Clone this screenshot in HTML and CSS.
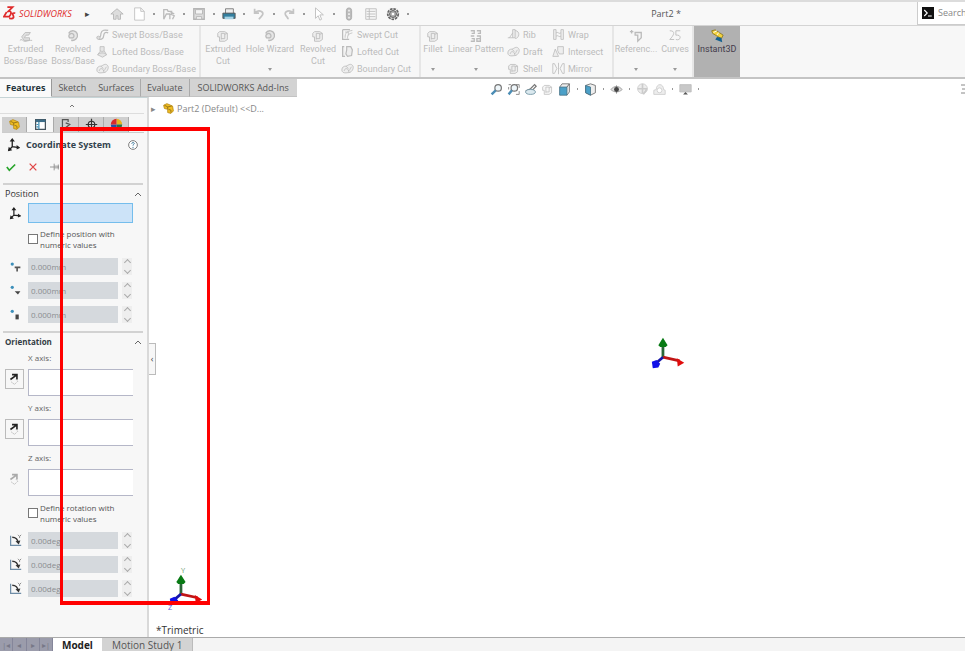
FILE: index.html
```html
<!DOCTYPE html>
<html lang="en">
<head>
<meta charset="utf-8">
<title>SOLIDWORKS - Part2</title>
<link rel="stylesheet" href="styles.css">
</head>
<body>
<svg class="defs" aria-hidden="true">
  <symbol id="part" viewBox="0 0 16 16"><path d="M2 4 6 2l7 3 1 6-3 3-4-1V9L3 8z" fill="#f0bd22" stroke="#b78914"/><path d="m3 4 4 2v3M7 6l5-1M8 9l3 1v3" fill="none" stroke="#8a6a18"/></symbol>
  <symbol id="axes" viewBox="0 0 16 16"><path d="M6 2v8l8 1M6 10l-4 4" fill="none" stroke="#222" stroke-width="1.5"/><path d="m6 0 3 4H3zM15 11l-4-3v5zM1 15l1-5 4 4z" fill="#222"/></symbol>
  <symbol id="flip" viewBox="0 0 16 16"><path d="m3 8 7-5M5 2h6v6" fill="none" stroke="currentColor" stroke-width="2"/><path d="m4 11 4 3 4-4-2-2" fill="none" stroke="#aaa" stroke-dasharray="2 1"/></symbol>
  <symbol id="angle" viewBox="0 0 16 16"><path d="M2 2v12h13" fill="none" stroke="#6e8ca6" stroke-width="1.5"/><path d="M4 4c4 0 7 3 7 7" fill="none" stroke="#333" stroke-width="2"/><path d="m8 9 6-1-2 5z" fill="#333"/><path d="m11 1 2 2 2-2M13 3v2" fill="none" stroke="#777"/></symbol>
  <symbol id="block" viewBox="0 0 16 16"><path d="M4 3h6l3 2v7l-3 2H4V9H2V5z" fill="#eee" stroke="currentColor"/><path d="M6 5v7M6 5h4v6H6M10 6l3-1" fill="none" stroke="currentColor"/></symbol>
  <symbol id="extrude" viewBox="0 0 16 16"><path d="M1 13c3-3 3 2 7 1s4-1 7-1M3 9l4-5h6l-2 3H8l-2 3h6v3H6z" fill="#e0e0e0" stroke="currentColor"/></symbol>
  <symbol id="round" viewBox="0 0 16 16"><path d="M3 5c3-5 9-3 10 1s-3 8-7 7M4 10c-3-4 4-7 5-3s-3 3-5 3z" fill="#e6e6e6" stroke="currentColor" stroke-width="1.5"/></symbol>
  <symbol id="sweep" viewBox="0 0 16 16"><path d="M1 11c4 2 5-1 5-4 1-5 5-5 9-4M3 14c7 1 6-4 7-7 1-2 3-2 5-1" fill="none" stroke="currentColor" stroke-width="1.5"/><circle cx="3" cy="12" r="2" fill="#ddd" stroke="currentColor"/></symbol>
  <symbol id="sweepcut" viewBox="0 0 16 16"><path d="M2 2v12h8M2 2h9" fill="none" stroke="currentColor" stroke-width="1.5"/><path d="M5 12c0-6 2-8 9-9M8 13c0-5 2-6 6-7M5 5h4v4" fill="none" stroke="currentColor"/></symbol>
  <symbol id="loftcut" viewBox="0 0 16 16"><path d="M4 2H2v12h3M7 2h5l2 4-1 7-5 1-2-3 1-5z" fill="#eee" stroke="currentColor" stroke-width="1.5"/></symbol>
  <symbol id="loft" viewBox="0 0 16 16"><path d="M5 2h5v5l3 5-5 3-6-3 3-4zM5 7c3 2 5 0 5 0M2 12c3-3 8-3 11 0" fill="#e6e6e6" stroke="currentColor"/></symbol>
  <symbol id="bound" viewBox="0 0 16 16"><path d="M1 10c0-4 3-5 5-5s5-4 8-1-1 9-4 9-8 2-9-3z" fill="#eee" stroke="currentColor"/><path d="M4 11c0-3 4-4 5-1s3-4 4-4M6 5l3 3M9 10l1 3" fill="none" stroke="currentColor"/></symbol>
  <symbol id="rib" viewBox="0 0 16 16"><path d="M1 12h6V2h3v10H7M10 3c7 1 5 10 0 10M3 12l4-6" fill="#eee" stroke="currentColor"/></symbol>
  <symbol id="wrap" viewBox="0 0 16 16"><path d="M2 2h3v12H2zM11 2h3v12h-3zM5 6c2-2 4 2 6 0M5 10c2-2 4 2 6 0" fill="#eee" stroke="currentColor"/></symbol>
  <symbol id="intersect" viewBox="0 0 16 16"><path d="M1 14 4 5l4 9zM7 2h7v9H9l-2-4z" fill="#eee" stroke="currentColor"/></symbol>
  <symbol id="pattern" viewBox="0 0 16 16"><path d="M2 2h4v3H3M2 8h4M3 11h3v3H2M9 2h4v3h-3M9 8h4v6H9v-3h4" fill="none" stroke="currentColor" stroke-width="1.5"/></symbol>
  <symbol id="mirror" viewBox="0 0 16 16"><path d="M1 2v12h2l3-6-3-6zM15 2v12h-2l-3-6 3-6zM8 1v14" fill="none" stroke="currentColor"/></symbol>
  <symbol id="triad" viewBox="0 0 40 40"><path d="M14 24V6" stroke="#2b6638" stroke-width="3"/><path d="m14 24 18 4" stroke="#c01515" stroke-width="3"/><path d="m14 24-7 6" stroke="#1616a8" stroke-width="3"/><path d="m14 3 5 8-2 2h-6l-2-2z" fill="#087a14"/><path d="m37 30-7 4-1-9z" fill="#e00c0c"/><path d="m2 29 5-2 4 4-2 4-6 1z" fill="#1010e8"/></symbol>
</svg>

<header class="titlebar">
  <a class="brand" href="#"><svg viewBox="0 0 16 18"><path d="M5 1h6L6 6c4-1 4 3 1 6H1l3-5M14 8c-6-1-1 3-2 5s-4 1-5 1" fill="none" stroke="#df2b2b" stroke-width="2"/></svg><span>SOLIDWORKS</span></a>
  <button class="more" aria-label="Menu">▸</button>
  <nav class="quick" aria-label="Quick access">
    <button aria-label="Home"><svg viewBox="0 0 16 16"><path d="m1 8 7-6 7 6h-3v6H9v-4H7v4H4V8z" fill="#ddd" stroke="#b5b5b5"/></svg></button><i class="gap"></i>
    <button aria-label="New"><svg viewBox="0 0 16 16"><path d="M3 1h7l4 4v10H3zM10 1v4h4" fill="#fff" stroke="#c0c0c0"/></svg></button><i class="dot"></i>
    <button aria-label="Open"><svg viewBox="0 0 16 16"><path d="M2 14V3h4l1 2h4v3M2 14l3-6h4M9 14V8l5 2-2 4M9 5l5 3" fill="none" stroke="#bbb" stroke-width="1.5"/></svg></button><i class="dot"></i>
    <button aria-label="Save"><svg viewBox="0 0 16 16"><path d="M2 2h12v12H2z" fill="#ddd" stroke="#b5b5b5" stroke-width="1.5"/><path d="M4 3h8v5H4zM5 11h6v3H5z" fill="#f4f4f4" stroke="#b5b5b5"/></svg></button><i class="dot"></i>
    <button aria-label="Print"><svg viewBox="0 0 16 16"><path d="M4 2h9v6H4z" fill="#eee" stroke="#777"/><path d="M1 7h14v6H1z" fill="#337f9f" stroke="#555"/><path d="M3 11h10v3H3z" fill="#a7d3e5"/></svg></button><i class="dot"></i>
    <button aria-label="Undo"><svg viewBox="0 0 16 16"><path d="M3 2v5h5M3 7c4-5 11-2 9 2-1 2-3 3-4 5" fill="none" stroke="#c4c4c4" stroke-width="2"/></svg></button><i class="dot"></i>
    <button aria-label="Redo"><svg viewBox="0 0 16 16"><path d="M13 2v5H8M13 7C9 2 2 5 4 9c1 2 3 3 3 5" fill="none" stroke="#c4c4c4" stroke-width="2"/></svg></button><i class="dot"></i>
    <button aria-label="Select"><svg viewBox="0 0 16 16"><path d="M4 1v12l3-3 2 5 2-1-2-5h4z" fill="#fff" stroke="#bbb"/></svg></button><i class="dot"></i>
    <button aria-label="Rebuild"><svg viewBox="0 0 16 16"><rect x="5" y="1" width="6" height="14" rx="3" fill="#bbb" stroke="#aaa"/><path d="M8 3v2M8 7v2M8 11v2" stroke="#eee" stroke-width="2"/></svg></button><i class="gap"></i>
    <button aria-label="File properties"><svg viewBox="0 0 16 16"><path d="M2 2h12v12H2zM6 2v12M3 5h10M3 8h10M3 11h10" fill="none" stroke="#bbb"/></svg></button><i class="gap"></i>
    <button aria-label="Options"><svg viewBox="0 0 16 16"><circle cx="8" cy="8" r="6" fill="none" stroke="#666" stroke-width="2" stroke-dasharray="3 1"/><circle cx="8" cy="8" r="4" fill="#aaa" stroke="#555"/><circle cx="8" cy="8" r="1.5" fill="#fff"/></svg></button><i class="dot"></i>
  </nav>
  <h1 class="doc">Part2 *</h1>
  <label class="search"><svg viewBox="0 0 16 16"><path d="M0 0h16v16H0z" fill="#111"/><path d="m3 4 4 4-4 4M8 12h5" fill="none" stroke="#fff" stroke-width="1.5"/></svg><input type="text" placeholder="Search" aria-label="Search"></label>
</header>

<div class="ribbon">
  <section class="group boss">
    <button class="big"><svg><use href="#extrude"/></svg><span>Extruded Boss/Base</span></button>
    <button class="big"><svg><use href="#round"/></svg><span>Revolved Boss/Base</span></button>
    <div class="list">
      <button><svg><use href="#sweep"/></svg>Swept Boss/Base</button>
      <button><svg><use href="#loft"/></svg>Lofted Boss/Base</button>
      <button><svg><use href="#bound"/></svg>Boundary Boss/Base</button>
    </div>
  </section>
  <section class="group cut">
    <button class="big"><svg><use href="#block"/></svg><span>Extruded Cut</span></button>
    <button class="big drop"><svg><use href="#round"/></svg><span>Hole Wizard</span></button>
    <button class="big"><svg><use href="#block"/></svg><span>Revolved Cut</span></button>
    <div class="list">
      <button><svg><use href="#sweepcut"/></svg>Swept Cut</button>
      <button><svg><use href="#loftcut"/></svg>Lofted Cut</button>
      <button><svg><use href="#bound"/></svg>Boundary Cut</button>
    </div>
  </section>
  <section class="group modify">
    <button class="big drop"><svg><use href="#block"/></svg><span>Fillet</span></button>
    <button class="big drop"><svg><use href="#pattern"/></svg><span>Linear Pattern</span></button>
    <div class="list">
      <button><svg><use href="#rib"/></svg>Rib</button>
      <button><svg><use href="#bound"/></svg>Draft</button>
      <button><svg><use href="#block"/></svg>Shell</button>
    </div>
    <div class="list">
      <button><svg><use href="#wrap"/></svg>Wrap</button>
      <button><svg><use href="#intersect"/></svg>Intersect</button>
      <button><svg><use href="#mirror"/></svg>Mirror</button>
    </div>
  </section>
  <section class="group refs">
    <button class="big drop"><svg viewBox="0 0 16 16"><path d="M1 3h4M3 1v4M7 4h7v6l-4 4V7H7z" fill="none" stroke="currentColor" stroke-width="1.5"/></svg><span>Referenc...</span></button>
    <button class="big drop"><svg viewBox="0 0 16 16"><path d="M2 2c7 0 5 5 0 10h5M14 2H9v5c7-1 6 7 0 5" fill="none" stroke="currentColor"/></svg><span>Curves</span></button>
  </section>
  <button class="big instant"><svg viewBox="0 0 16 16"><path d="m2 2 4-1 9 6-2 4-10-6z" fill="#f4d33f" stroke="#8c7820"/><path d="m8 9 5 1 1 5-8-3z" fill="#15618f"/><path d="m4 4 4-2M8 7l2-3" stroke="#fff"/></svg><span>Instant3D</span></button>
</div>

<div class="tabrow">
  <nav class="tabs">
    <a href="#" class="on">Features</a><a href="#">Sketch</a><a href="#" class="line">Surfaces</a><a href="#" class="line">Evaluate</a><a href="#" class="addins">SOLIDWORKS Add-Ins</a>
  </nav>
  <nav class="hud" aria-label="View">
    <button aria-label="Zoom to fit"><svg viewBox="0 0 16 16"><circle cx="10" cy="6" r="4" fill="#eef6fa" stroke="#777" stroke-width="1.5"/><path d="m7 9-5 5" stroke="#4b8db5" stroke-width="3"/></svg></button>
    <button aria-label="Zoom to area"><svg viewBox="0 0 16 16"><path d="M2 2h3M11 2h4v4M2 5v3M15 10v4h-4" fill="none" stroke="#777"/><circle cx="9" cy="6" r="4" fill="#eef6fa" stroke="#777" stroke-width="1.5"/><path d="m6 9-4 5" stroke="#4b8db5" stroke-width="3"/></svg></button>
    <button aria-label="Previous view"><svg viewBox="0 0 16 16"><path d="m2 10 6-3 5-5 2 2-5 5" fill="none" stroke="#777" stroke-width="1.5"/><ellipse cx="8" cy="11" rx="6" ry="3" fill="#dbe9ef" stroke="#678c9c"/></svg></button>
    <button aria-label="Section view" class="faint"><svg><use href="#block"/></svg></button>
    <button aria-label="View orientation"><svg viewBox="0 0 16 16"><path d="m2 5 3-4h9v10l-3 4" fill="#eee" stroke="#666"/><path d="M2 5h9v10H2z" fill="#4ba0c8" stroke="#447085"/><path d="m11 5 3-4" stroke="#555"/></svg></button><i class="dot"></i>
    <button aria-label="Display style"><svg viewBox="0 0 16 16"><path d="m2 3 6-2 6 2v9l-6 3-6-3z" fill="#eee" stroke="#666"/><path d="m2 3 6 2v10l-6-3z" fill="#4ba0c8" stroke="#447085"/></svg></button><i class="dot"></i>
    <button aria-label="Hide or show"><svg viewBox="0 0 16 16"><path d="M1 8c4-5 10-5 14 0-4 4-10 4-14 0z" fill="#ddd" stroke="#999"/><path d="M8 3v10" stroke="#777"/><circle cx="8" cy="8" r="3" fill="#444"/></svg></button><i class="dot"></i>
    <button aria-label="Edit appearance" class="faint"><svg viewBox="0 0 16 16"><circle cx="8" cy="7" r="6" fill="#ddd" stroke="#999"/><path d="M2 7h12M8 1v12M9 14l4-6" stroke="#999" stroke-width="2"/></svg></button>
    <button aria-label="Apply scene" class="faint"><svg viewBox="0 0 16 16"><path d="M1 14V9l3-1c0-8 9-8 9 0l2 1v5z" fill="#ddd" stroke="#999"/><circle cx="8" cy="9" r="3" fill="#fff" stroke="#999"/></svg></button><i class="dot"></i>
    <button aria-label="View settings"><svg viewBox="0 0 16 16"><path d="M1 2h14v9H1z" fill="#c8c8c8" stroke="#bbb"/><path d="M5 14h6l-3-3z" fill="#555"/></svg></button><i class="dot"></i>
  </nav>
  <button class="edge" aria-label="Window options"><svg viewBox="0 0 4 12"><path d="M0 2h4M1 6h3M0 10h4" stroke="#888"/></svg></button>
</div>

<main class="work">
  <aside class="panel">
    <button class="collapse" aria-label="Collapse"><svg viewBox="0 0 8 8"><path d="m2 5 2-2 2 2" fill="none" stroke="#777"/></svg></button>
    <nav class="ptabs">
      <button aria-label="Feature tree"><svg><use href="#part"/></svg></button>
      <button class="on" aria-label="Properties"><svg viewBox="0 0 16 16"><path d="M2 2h12v12H2z" fill="#fff" stroke="#44525c" stroke-width="1.5"/><path d="M2 2h12v3H2z" fill="#3c6c87"/><path d="M6 5v9M3 8h2M3 11h2" stroke="#3c8db4" stroke-width="1.5"/></svg></button>
      <button aria-label="Configurations"><svg viewBox="0 0 16 16"><path d="M3 14V2h7v3M7 6l5 2-4 3 5 3" fill="none" stroke="#555" stroke-width="1.5"/></svg></button>
      <button aria-label="Dimensions"><svg viewBox="0 0 16 16"><circle cx="8" cy="8" r="4" fill="#ddd" stroke="#333" stroke-width="1.5"/><path d="M1 8h14M8 1v14" stroke="#333" stroke-width="1.5"/></svg></button>
      <button aria-label="Display"><svg viewBox="0 0 16 16"><path d="M8 8V1a7 7 0 0 1 7 7z" fill="#e9b51c"/><path d="M8 8h7a7 7 0 0 1-7 7z" fill="#2e7146"/><path d="M8 8v7a7 7 0 0 1-7-7z" fill="#264ea5"/><path d="M8 8H1a7 7 0 0 1 7-7z" fill="#d82a2a"/></svg></button>
    </nav>
    <h2 class="ptitle"><svg><use href="#axes"/></svg><span>Coordinate System</span><button aria-label="Help"><svg viewBox="0 0 16 16"><circle cx="8" cy="8" r="7" fill="#fff" stroke="#777" stroke-width="1.5"/><path d="M6 6c0-3 5-2 4 0-.5 1-2 1-2 3M8 11v2" fill="none" stroke="#357496" stroke-width="1.5"/></svg></button></h2>
    <div class="confirm">
      <button aria-label="OK"><svg viewBox="0 0 12 12"><path d="m1 6 3 4 7-7" fill="none" stroke="#29a52c" stroke-width="2"/></svg></button>
      <button aria-label="Cancel"><svg viewBox="0 0 12 12"><path d="m2 2 8 8M10 2l-8 8" stroke="#e04444" stroke-width="1.5"/></svg></button>
      <button aria-label="Keep visible"><svg viewBox="0 0 12 12"><path d="M0 6h5M5 2v8M5 5h5v2H5M10 3v6" fill="none" stroke="#888"/></svg></button>
    </div>

    <section class="sect">
      <h3>Position<svg viewBox="0 0 8 8"><path d="m1 6 3-3 3 3" fill="none" stroke="#666"/></svg></h3>
      <div class="row pick"><svg><use href="#axes"/></svg><input type="text" class="sel" aria-label="Origin"></div>
      <label class="check"><input type="checkbox"><span>Define position with numeric values</span></label>
      <div class="row num"><svg viewBox="0 0 16 16"><circle cx="4" cy="5" r="2" fill="#3c8fba"/><path d="M7 9h7M10 9v5" stroke="#555" stroke-width="2"/></svg><input type="text" value="0.000mm" disabled aria-label="X position"><span class="spin"><button aria-label="Increase X" disabled></button><button aria-label="Decrease X" disabled></button></span></div>
      <div class="row num"><svg viewBox="0 0 16 16"><circle cx="4" cy="4" r="2" fill="#3c8fba"/><path d="M7 9h7l-3 4z" fill="#444"/></svg><input type="text" value="0.000mm" disabled aria-label="Y position"><span class="spin"><button aria-label="Increase Y" disabled></button><button aria-label="Decrease Y" disabled></button></span></div>
      <div class="row num"><svg viewBox="0 0 16 16"><circle cx="4" cy="4" r="2" fill="#3c8fba"/><path d="M8 8h4v6H8z" fill="#444"/></svg><input type="text" value="0.000mm" disabled aria-label="Z position"><span class="spin"><button aria-label="Increase Z" disabled></button><button aria-label="Decrease Z" disabled></button></span></div>
    </section>

    <section class="sect orient">
      <h3>Orientation<svg viewBox="0 0 8 8"><path d="m1 6 3-3 3 3" fill="none" stroke="#666"/></svg></h3>
      <label class="axis" for="ax">X axis:</label>
      <div class="row ref"><button aria-label="Reverse X"><svg><use href="#flip"/></svg></button><input id="ax" type="text"></div>
      <label class="axis" for="ay">Y axis:</label>
      <div class="row ref"><button aria-label="Reverse Y"><svg><use href="#flip"/></svg></button><input id="ay" type="text"></div>
      <label class="axis" for="az">Z axis:</label>
      <div class="row ref"><button aria-label="Reverse Z" disabled><svg><use href="#flip"/></svg></button><input id="az" type="text"></div>
      <label class="check"><input type="checkbox"><span>Define rotation with numeric values</span></label>
      <div class="row num"><svg><use href="#angle"/></svg><input type="text" value="0.00deg" disabled aria-label="X rotation"><span class="spin"><button aria-label="Increase X angle" disabled></button><button aria-label="Decrease X angle" disabled></button></span></div>
      <div class="row num"><svg><use href="#angle"/></svg><input type="text" value="0.00deg" disabled aria-label="Y rotation"><span class="spin"><button aria-label="Increase Y angle" disabled></button><button aria-label="Decrease Y angle" disabled></button></span></div>
      <div class="row num"><svg><use href="#angle"/></svg><input type="text" value="0.00deg" disabled aria-label="Z rotation"><span class="spin"><button aria-label="Increase Z angle" disabled></button><button aria-label="Decrease Z angle" disabled></button></span></div>
    </section>
  </aside>

  <section class="canvas">
    <div class="tree"><span class="tri">▸</span><svg><use href="#part"/></svg><span>Part2 (Default) &lt;&lt;D...</span></div>
    <button class="handle" aria-label="Hide panel">‹</button>
    <svg class="origin"><use href="#triad"/></svg>
    <svg class="corner" viewBox="0 0 40 48"><text x="14" y="7" fill="#6b9c70">Y</text><text x="0" y="47" fill="#6565dd">Z</text><use href="#triad" y="6" width="40" height="40"/></svg>
    <p class="view">*Trimetric</p>
  </section>
</main>

<footer class="bottom">
  <span class="steps"><button aria-label="First">|◂</button><button aria-label="Previous">◂</button><button aria-label="Next">▸</button><button aria-label="Last">▸|</button></span>
  <a href="#" class="on">Model</a><a href="#">Motion Study 1</a>
</footer>
<div class="mark"></div>
</body>
</html>
```
FILE: styles.css
```css
* { box-sizing: border-box; }
body {
  margin: 0; height: 100vh; position: relative; overflow: hidden;
  display: grid; grid-template-rows: auto auto auto 1fr auto;
  font: 9px/12px "Open Sans", "Noto Sans", sans-serif; color: #444; background: #fff;
}
button { font: inherit; color: inherit; background: none; border: 0; padding: 0; }
a { color: inherit; text-decoration: none; }
input { font: inherit; min-width: 0; margin: 0; }
h1, h2, h3, p { margin: 0; font: inherit; }
svg { display: block; width: 14px; height: 14px; flex: none; }
.defs { position: absolute; width: 0; height: 0; }
.dot { flex: none; width: 14px; height: 2px; background: radial-gradient(circle, #999 1px, transparent 1px); }
.gap { flex: none; width: 6px; }

.titlebar {
  display: flex; align-items: center; height: 26px; background: #f8f8f8;
  border-top: 2px solid #dcdcdc; border-bottom: 1px solid #d4d4d4;
}
.brand { display: flex; align-items: center; gap: 2px; width: 73px; padding-left: 3px; color: #df2b2b; font: italic 9px/12px "Open Sans", sans-serif; }
.brand svg { height: 16px; }
.more { width: 28px; }
.quick { display: flex; align-items: center; padding-left: 8px; }
.quick button { width: 16px; padding: 0 1px; }
.doc { flex: 1; text-align: center; color: #555; }
.search { display: flex; align-items: center; gap: 4px; width: 48px; height: 23px; padding-left: 4px; background: #fff; border: solid #ccc; border-width: 0 0 1px 1px; }
.search svg { width: 12px; height: 12px; }
.search input { width: 27px; border: 0; padding: 0; background: none; }
.search input::placeholder { color: #888; opacity: 1; }

.ribbon { display: flex; height: 53px; background: #f7f7f7; border-bottom: 2px solid #c4c4c4; color: #bbb; font-family: Roboto, "Open Sans", sans-serif; }
.group { display: grid; border-right: 2px solid #e6e6e6; }
.boss { grid-template-columns: 49px 46px 103px; padding-left: 1px; }
.cut { grid-template-columns: 44px 50px 46px 78px; }
.modify { grid-template-columns: 24px 62px 45px 60px; }
.refs { grid-template-columns: 44px 34px; }
.big { position: relative; display: flex; flex-direction: column; align-items: center; justify-content: flex-start; padding-top: 3px; line-height: 12px; white-space: nowrap; }
.big span { white-space: normal; width: min-content; text-align: center; }
.drop span, .instant span { white-space: nowrap; }
.drop::after, .spin button::after { content: ""; }
.drop::after { position: absolute; bottom: 6px; border: 2px solid transparent; border-top: 3px solid #999; border-bottom: 0; }
.list { display: grid; grid-template-rows: repeat(3, 17px); }
.list button { display: flex; align-items: center; gap: 3px; white-space: nowrap; }
.list svg { width: 13px; height: 13px; }
.instant { width: 46px; background: #b1b1b1; color: #443c4c; }

.tabrow { display: flex; align-items: flex-start; height: 18px; }
.tabs { display: flex; height: 18px; }
.tabs a { padding: 0 6px; line-height: 18px; background: #d3d3d3; color: #555; white-space: nowrap; border-bottom: 1px solid #c3c3c3; }
.tabs .on { background: #fafafa; color: #24343c; font-weight: bold; border-right: 1px solid #999; border-bottom-color: #fafafa; }
.tabs .line { border-right: 1px solid #aaa; }
.tabs .addins { padding: 0 8px; }
.hud { display: flex; align-items: center; height: 20px; margin-left: 191px; color: #888; }
.hud button { width: 17px; padding: 0 2px; }
.hud .dot { width: 9px; }
.hud svg { width: 13px; height: 13px; }
.faint { opacity: .5; }
.edge { margin: 4px 0 0 auto; }
.edge svg { width: 4px; height: 12px; }

.work { display: grid; grid-template-columns: 149px 1fr; min-height: 0; }
.panel { background: #f7f7f7; border-right: 2px solid #d9d9d9; border-top: 1px solid #c6d4d6; padding-bottom: 20px; }
.collapse { display: grid; place-items: center; width: 144px; height: 16px; border-bottom: 1px solid #ddd; }
.collapse svg { width: 8px; height: 8px; }
.ptabs { display: flex; margin: 3px 3px 0 2px; border-bottom: 1px solid #ccc; }
.ptabs button { display: grid; place-items: center; width: 25px; height: 15px; background: #cfcfcf; border-right: 1px solid #aaa; }
.ptabs .on { background: #f7f7f7; width: 27px; }
.ptabs svg { width: 13px; height: 13px; }
.ptitle { display: flex; align-items: center; gap: 5px; height: 24px; padding: 0 9px 0 7px; font-weight: bold; color: #32434e; white-space: nowrap; }
.ptitle button { margin-left: auto; }
.ptitle button svg { width: 10px; height: 10px; }
.confirm { display: flex; align-items: center; gap: 12px; margin-bottom: 6px; padding: 0 6px; height: 20px; }
.confirm svg { width: 10px; height: 10px; }
.sect { margin: 0 4px 0 3px; border-top: 2px solid #d2d2d2; padding-bottom: 1px; }
.sect h3 { display: flex; align-items: center; justify-content: space-between; height: 18px; padding: 0 1px 0 2px; color: #333; }
.sect h3 svg { width: 8px; height: 8px; }
.orient h3 { font-weight: bold; color: #333c44; font-size: 8px; }
.row { display: flex; align-items: center; }
.row > svg { width: 13px; height: 13px; margin: 0 6px; }
.row input { width: 105px; }
.sel { height: 20px; background: #cce3f8; border: 1px solid #74bdec; }
.check { display: flex; align-items: center; height: 35px; gap: 2px; padding: 0 0 3px 25px; font-size: 8px; line-height: 11px; color: #555; }
.check input { appearance: none; flex: none; width: 10px; height: 10px; border: 1px solid #777; background: #fff; }
.check span { width: 84px; }
.num { height: 17px; margin-bottom: 7px; }
.num input { width: 90px; height: 17px; padding: 0 3px; border: 0; background: #d5d9dd; color: #8a8d90; font-size: 8px; }
.spin { display: grid; width: 10px; height: 17px; margin-left: 4px; background: #eee; }
.spin button { display: grid; place-items: center; }
.spin button::after { width: 4px; height: 4px; border: solid #aaa; border-width: 1px 0 0 1px; transform: rotate(45deg); }
.spin button + button::after { transform: rotate(225deg); }
.axis { display: block; height: 18px; padding-left: 25px; font-size: 8px; line-height: 14px; color: #666; }
.ref { align-items: flex-start; height: 27px; margin-bottom: 5px; }
.ref button { display: grid; place-items: center; flex: none; width: 19px; height: 20px; margin: 0 4px 0 2px; border: 1px solid #bbb; color: #222; }
.ref button:disabled { border-color: transparent; color: #aaa; }
.ref svg { width: 13px; height: 13px; }
.ref input { height: 27px; border: solid #b5b7c8; border-width: 1px 0 1px 1px; background: #fff; }
.ref + .check { margin-top: -4px; }

.canvas { position: relative; background: #fff; overflow: hidden; }
.tree { display: flex; align-items: center; gap: 2px; padding: 5px 2px; color: #888; white-space: nowrap; }
.tree svg { width: 13px; height: 13px; }
.tree .tri { width: 9px; }
.handle { position: absolute; left: 0; top: 246px; width: 7px; height: 32px; background: #f7f7f7; border: 1px solid #bbb; border-left: 0; line-height: 28px; }
.origin { position: absolute; left: 501px; top: 238px; width: 37px; height: 37px; }
.corner { position: absolute; left: 19px; top: 469px; width: 37px; height: 45px; font-size: 8px; }
.view { position: absolute; left: 7px; bottom: 0; font-size: 10px; line-height: 13px; color: #333; }

.bottom { display: flex; height: 14px; background: #f4f4f4; border-top: 1px solid #aaa; }
.steps { display: flex; width: 53px; background: #9b9cab; color: #777887; }
.steps button { flex: 1; border-right: 1px solid #85869a; line-height: 12px; font-size: 8px; }
.bottom a { padding: 0 10px; font-size: 10px; line-height: 14px; background: #d3d3d3; color: #555; border-right: 1px solid #bbb; }
.bottom .on { padding: 0 9px; background: #fff; color: #222; font-weight: bold; border: 0; }
.mark { position: absolute; left: 60px; top: 127px; width: 150px; height: 478px; border: solid #f00; border-width: 4px 3px; pointer-events: none; }
```
